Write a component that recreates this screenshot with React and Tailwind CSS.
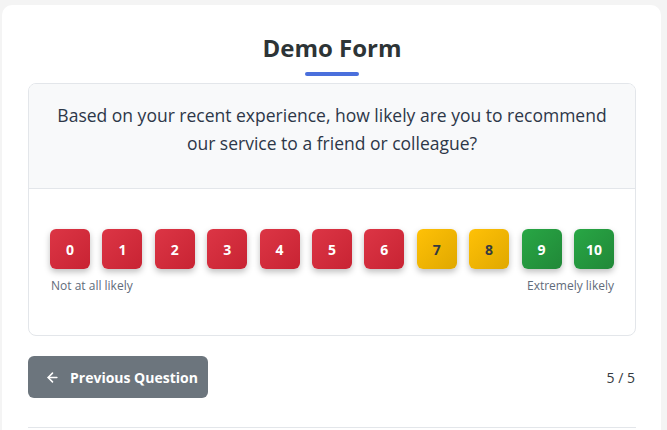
import React from 'react';
import { ArrowLeft } from 'lucide-react';

const scores = [0, 1, 2, 3, 4, 5, 6, 7, 8, 9, 10];

const scoreClass = (n) => {
  if (n <= 6) return 'bg-gradient-to-br from-[#dc3545] to-[#c82333] text-white';
  if (n <= 8) return 'bg-gradient-to-br from-[#ffc107] to-[#e0a800] text-[#343a40]';
  return 'bg-gradient-to-br from-[#28a745] to-[#218838] text-white';
};

const App = () => {
  return (
    <div className="min-h-[430px] bg-[#f4f4f4] px-[2px] pt-[5px] font-['Open_Sans',sans-serif]">
      <div className="bg-white rounded-t-[10px] w-[659px] h-[425px] overflow-hidden pl-[26px] pr-[25px] pt-[28px]">
        <div className="flex flex-col items-center">
          <h1 className="text-[24px] leading-[30px] font-bold text-[#2d3436]">Demo Form</h1>
          <div className="mt-[9px] w-[54px] h-[4px] rounded-full bg-[#4a6fdc]"></div>
        </div>

        <div className="mt-[7px] border border-[#e3e6ea] rounded-[8px] overflow-hidden">
          <div className="bg-[#f8f9fa] border-b border-[#e3e6ea] h-[105px] px-[24px] pt-[17px]">
            <p className="text-center text-[17.5px] leading-[28px] font-medium text-[#2d3748]">
              Based on your recent experience, how likely are you to recommend our service to a friend or colleague?
            </p>
          </div>
          <div className="px-[21px] pt-[40px] pb-[40px]">
            <div className="flex justify-between">
              {scores.map((n) => (
                <button
                  key={n}
                  className={`w-[40px] h-[40px] rounded-[6px] text-[14px] font-bold shadow-[0_3px_6px_rgba(0,0,0,0.25)] flex items-center justify-center ${scoreClass(n)}`}
                >
                  {n}
                </button>
              ))}
            </div>
            <div className="flex justify-between mt-[8px] text-[12px] text-[#5f6b7a]">
              <span className="pl-[1px]">Not at all likely</span>
              <span>Extremely likely</span>
            </div>
          </div>
        </div>

        <div className="flex items-center justify-between mt-[20px]">
          <button className="flex items-center gap-[10px] w-[180px] h-[42px] pl-[17px] rounded-[6px] bg-[#6c757d] text-white text-[14px] font-bold">
            <ArrowLeft className="w-[15px] h-[15px]" strokeWidth={2.5} />
            Previous Question
          </button>
          <span className="text-[14px] text-[#343a40] pr-[1px]">5 / 5</span>
        </div>

        <div className="mt-[29px] border-t border-[#e3e6ea]"></div>
      </div>
    </div>
  );
};

export default App;
